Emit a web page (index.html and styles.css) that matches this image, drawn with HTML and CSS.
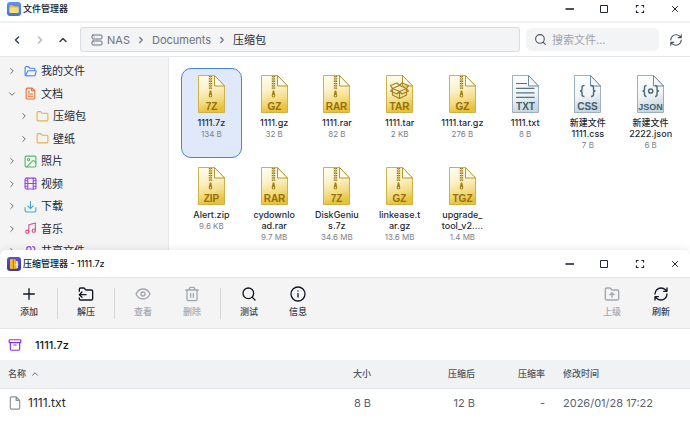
FILE: index.html
```html
<!DOCTYPE html>
<html lang="zh-CN">
<head>
<meta charset="utf-8">
<meta name="viewport" content="width=device-width, initial-scale=1">
<title>文件管理器</title>
<link rel="stylesheet" href="styles.css">
</head>
<body>
<svg class="sprite" aria-hidden="true">
  <defs>
    <linearGradient id="gold" x1="0" y1="0" x2="0.2" y2="1">
      <stop offset="0" stop-color="#fffdf0"/><stop offset="0.4" stop-color="#fbf3cd"/><stop offset="0.75" stop-color="#f3dc82"/><stop offset="1" stop-color="#e8c23c"/>
    </linearGradient>
    <linearGradient id="steel" x1="0" y1="0" x2="0.2" y2="1">
      <stop offset="0" stop-color="#ffffff"/><stop offset="0.6" stop-color="#f0f4f7"/><stop offset="1" stop-color="#c9d5dd"/>
    </linearGradient>
    <linearGradient id="violet" x1="0" y1="0" x2="0" y2="1">
      <stop offset="0" stop-color="#5a52c8"/><stop offset="1" stop-color="#3f37a4"/>
    </linearGradient>
    <linearGradient id="azure" x1="0" y1="0" x2="0" y2="1">
      <stop offset="0" stop-color="#5b93f5"/><stop offset="1" stop-color="#3b74ea"/>
    </linearGradient>
  </defs>
  <symbol id="gold-page" viewBox="0 0 27 38">
    <path d="M.5.5H16.5L26.5 11V37.5H.5Z" fill="url(#gold)" stroke="#cfb04a"/>
    <path d="M16.5.5V11H26.5Z" fill="#fffdf0" stroke="#b8962a"/>
  </symbol>
  <symbol id="steel-page" viewBox="0 0 27 38">
    <path d="M.5.5H16.5L26.5 11V37.5H.5Z" fill="url(#steel)" stroke="#9db0bc"/>
    <path d="M16.5.5V11H26.5Z" fill="#f4f8fa" stroke="#6f8b9c"/>
  </symbol>
  <symbol id="zipper" viewBox="0 0 27 38">
    <path d="M12.5 1V14" stroke="#94700f" stroke-width="3.4" stroke-dasharray="1.3 1"/>
    <path d="M12.5 1V14" stroke="#d3b75c" stroke-width=".8"/>
    <path d="M11.700 15.5h1.600l1 5.200a1.800 1.800 0 1 1-3.600 0z" fill="#a37e14"/>
    <circle cx="12.5" cy="20.8" r=".8" fill="#fff4c0"/>
  </symbol>
  <symbol id="open-box" viewBox="0 0 27 38">
    <g fill="none" stroke="#a5811c" stroke-width="1.2" stroke-linejoin="round">
      <path d="M6.5 13.5V20l7 3.5 7-3.5v-6.5M13.5 16v7.500M6.500 13.500l7-3 7 3-7 3zM6.500 13.500l-2 2.500 6.500 3 2.500-2.500 2.500 2.500 6.500-3-2-2.500M6.500 13.500l-2-3 6.500-2.500 2.500 2.500 2.500-2.500 6.500 2.500-2 3"/>
    </g>
  </symbol>
  <symbol id="minus" viewBox="0 0 12 12"><path d="M1.500 6h8.500" stroke="currentColor" stroke-width="1.600"/></symbol>
  <symbol id="square" viewBox="0 0 12 12"><path d="M1.500 2.500h7v7h-7z" fill="none" stroke="currentColor"/></symbol>
  <symbol id="corners" viewBox="0 0 12 12"><path d="M2.500 4.500v-2h2M7.500 2.500h2v2M9.500 7.500v2h-2M4.500 9.500h-2v-2" fill="none" stroke="currentColor" stroke-width="1.200"/></symbol>
  <symbol id="cross" viewBox="0 0 12 12"><path d="M3.200 3.200l5.600 5.600M8.800 3.200l-5.600 5.600" stroke="currentColor"/></symbol>
  <symbol id="left" viewBox="0 0 24 24"><path d="M15 18l-6-6 6-6"/></symbol>
  <symbol id="right" viewBox="0 0 24 24"><path d="M9 18l6-6-6-6"/></symbol>
  <symbol id="up" viewBox="0 0 24 24"><path d="M18 15l-6-6-6 6"/></symbol>
  <symbol id="down" viewBox="0 0 24 24"><path d="M6 9l6 6 6-6"/></symbol>
  <symbol id="server" viewBox="0 0 24 24"><rect x="2" y="2" width="20" height="8" rx="2"/><rect x="2" y="14" width="20" height="8" rx="2"/><path d="M6 6h.01M6 18h.01"/></symbol>
  <symbol id="search" viewBox="0 0 24 24"><circle cx="11" cy="11" r="8"/><path d="M21 21l-4.300-4.300"/></symbol>
  <symbol id="refresh" viewBox="0 0 24 24"><path d="M3 12a9 9 0 0 1 9-9 9.750 9.750 0 0 1 6.740 2.740L21 8M21 3v5h-5M21 12a9 9 0 0 1-9 9 9.750 9.750 0 0 1-6.740-2.740L3 16M8 16H3v5"/></symbol>
  <symbol id="folder" viewBox="0 0 24 24"><path d="M20 20a2 2 0 0 0 2-2V8a2 2 0 0 0-2-2h-7.900a2 2 0 0 1-1.690-.9L9.600 3.900A2 2 0 0 0 7.930 3H4a2 2 0 0 0-2 2v13a2 2 0 0 0 2 2Z"/></symbol>
  <symbol id="folder-open" viewBox="0 0 24 24"><path d="M4 20a2 2 0 0 1-2-2V5a2 2 0 0 1 2-2h4l3 3h7a2 2 0 0 1 2 2v2M3 19l3.500-7a2 2 0 0 1 2-1.500H21a1.500 1.500 0 0 1 1.400 2l-2 6a2 2 0 0 1-1.900 1.500H4"/></symbol>
  <symbol id="doc" viewBox="0 0 24 24"><path d="M15 2H6a2 2 0 0 0-2 2v16a2 2 0 0 0 2 2h12a2 2 0 0 0 2-2V7ZM14 2v5h6M10 9H8M16 13H8M16 17H8"/></symbol>
  <symbol id="image" viewBox="0 0 24 24"><rect x="2" y="2" width="20" height="20" rx="2"/><circle cx="8.500" cy="8.500" r="2"/><path d="M5 22l11-11a2 2 0 0 1 2.800 0L22 14"/></symbol>
  <symbol id="film" viewBox="0 0 24 24"><rect x="2" y="2" width="20" height="20" rx="2"/><path d="M7 2v20M17 2v20M7 12h10M2 7h5M2 12h5M2 17h5M17 17h5M17 12h5M17 7h5"/></symbol>
  <symbol id="download" viewBox="0 0 24 24"><path d="M2 14v5a3 3 0 0 0 3 3h14a3 3 0 0 0 3-3v-5M7 11l5 5 5-5M12 3v13"/></symbol>
  <symbol id="music" viewBox="0 0 24 24"><path d="M9 18V5l12-3v14"/><circle cx="6" cy="18" r="3"/><circle cx="18" cy="16" r="3"/></symbol>
  <symbol id="users" viewBox="0 0 24 24"><circle cx="9" cy="7" r="4"/><path d="M2 21v-2a4 4 0 0 1 4-4h6a4 4 0 0 1 4 4v2M16 3a4 4 0 0 1 0 8M22 21v-2a4 4 0 0 0-3-3.900"/></symbol>
  <symbol id="plus" viewBox="0 0 24 24"><path d="M4 12h16M12 4v16"/></symbol>
  <symbol id="extract" viewBox="0 0 24 24"><path d="M2 8V5a2 2 0 0 1 2-2h5l3 3h8a2 2 0 0 1 2 2v11a2 2 0 0 1-2 2H4a2 2 0 0 1-2-2v-1M2 13h10M6 9l-4 4 4 4"/></symbol>
  <symbol id="eye" viewBox="0 0 24 24"><path d="M1.500 12S5 4.500 12 4.500 22.500 12 22.500 12 19 19.500 12 19.500 1.500 12 1.500 12Z"/><circle cx="12" cy="12" r="3"/></symbol>
  <symbol id="trash" viewBox="0 0 24 24"><path d="M2.500 6h19M19.500 6v14a2 2 0 0 1-2 2h-11a2 2 0 0 1-2-2V6M8 6V3.500A2 2 0 0 1 10 2h4a2 2 0 0 1 2 1.500V6M10 11v6M14 11v6"/></symbol>
  <symbol id="info" viewBox="0 0 24 24"><circle cx="12" cy="12" r="10.500"/><path d="M12 16.500V11.500M12 7.500h.01"/></symbol>
  <symbol id="folder-up" viewBox="0 0 24 24"><path d="M20 21a2 2 0 0 0 2-2V8a2 2 0 0 0-2-2h-8L9 3H4a2 2 0 0 0-2 2v14a2 2 0 0 0 2 2ZM12 10v7M9 13l3-3 3 3"/></symbol>
  <symbol id="archive" viewBox="0 0 24 24"><rect x="2" y="3" width="20" height="5" rx="1"/><path d="M4 8v11a2 2 0 0 0 2 2h12a2 2 0 0 0 2-2V8M10 12h4"/></symbol>
  <symbol id="file" viewBox="0 0 24 24"><path d="M14 1.500H6a2 2 0 0 0-2 2v17a2 2 0 0 0 2 2h12a2 2 0 0 0 2-2V7.500ZM14 1.500v6h6"/></symbol>
</svg>

<section class="window files" aria-label="文件管理器">
  <header class="titlebar">
    <svg class="logo" viewBox="0 0 14 14"><rect width="14" height="14" rx="3" fill="url(#azure)"/><path d="M2.500 4a.8.8 0 0 1 .8-.8h2.500l1 1h4a.8.8 0 0 1 .8.8v5a.8.8 0 0 1-.8.8H3.300a.8.8 0 0 1-.8-.8z" fill="#eeb93c"/><path d="M2.500 5.600h9.100v4.600a.8.8 0 0 1-.8.8H3.300a.8.8 0 0 1-.8-.8z" fill="#fbdc76"/></svg>
    <h1>文件管理器</h1>
    <div class="controls">
      <button aria-label="最小化"><svg><use href="#minus"/></svg></button>
      <button aria-label="最大化"><svg><use href="#square"/></svg></button>
      <button aria-label="全屏"><svg><use href="#corners"/></svg></button>
      <button aria-label="关闭"><svg><use href="#cross"/></svg></button>
    </div>
  </header>
  <div class="navbar">
    <div class="history">
      <button aria-label="后退"><svg class="icon"><use href="#left"/></svg></button>
      <button aria-label="前进" disabled><svg class="icon"><use href="#right"/></svg></button>
      <button aria-label="上级"><svg class="icon"><use href="#up"/></svg></button>
    </div>
    <nav class="crumbs" aria-label="路径">
      <a href="#"><svg class="icon"><use href="#server"/></svg>NAS</a>
      <svg class="icon arrow"><use href="#right"/></svg>
      <a href="#">Documents</a>
      <svg class="icon arrow"><use href="#right"/></svg>
      <a href="#" class="current">压缩包</a>
    </nav>
    <label class="search"><svg class="icon"><use href="#search"/></svg><input type="search" placeholder="搜索文件..." aria-label="搜索文件"></label>
    <button class="reload" aria-label="刷新"><svg class="icon"><use href="#refresh"/></svg></button>
  </div>
  <div class="body">
    <nav class="sidebar" aria-label="文件夹">
      <ul>
        <li><a href="#"><svg class="icon arrow"><use href="#right"/></svg><svg class="icon blue"><use href="#folder-open"/></svg>我的文件</a></li>
        <li><a href="#"><svg class="icon arrow"><use href="#down"/></svg><svg class="icon orange"><use href="#doc"/></svg>文档</a></li>
        <li class="child"><a href="#"><svg class="icon arrow"><use href="#right"/></svg><svg class="icon amber"><use href="#folder"/></svg>压缩包</a></li>
        <li class="child"><a href="#"><svg class="icon arrow"><use href="#right"/></svg><svg class="icon amber"><use href="#folder"/></svg>壁纸</a></li>
        <li><a href="#"><svg class="icon arrow"><use href="#right"/></svg><svg class="icon green"><use href="#image"/></svg>照片</a></li>
        <li><a href="#"><svg class="icon arrow"><use href="#right"/></svg><svg class="icon purple"><use href="#film"/></svg>视频</a></li>
        <li><a href="#"><svg class="icon arrow"><use href="#right"/></svg><svg class="icon sky"><use href="#download"/></svg>下载</a></li>
        <li><a href="#"><svg class="icon arrow"><use href="#right"/></svg><svg class="icon pink"><use href="#music"/></svg>音乐</a></li>
        <li><a href="#"><svg class="icon arrow"><use href="#right"/></svg><svg class="icon purple"><use href="#users"/></svg>共享文件</a></li>
      </ul>
    </nav>
    <main class="grid">
      <button class="item selected"><svg class="type" viewBox="0 0 27 38"><use href="#gold-page"/><use href="#zipper"/><text x="13.500" y="35">7Z</text></svg><span class="name">1111.7z</span><span class="size">134 B</span></button>
      <button class="item"><svg class="type" viewBox="0 0 27 38"><use href="#gold-page"/><use href="#zipper"/><text x="13.500" y="35">GZ</text></svg><span class="name">1111.gz</span><span class="size">32 B</span></button>
      <button class="item"><svg class="type" viewBox="0 0 27 38"><use href="#gold-page"/><use href="#zipper"/><text x="13.500" y="35">RAR</text></svg><span class="name">1111.rar</span><span class="size">82 B</span></button>
      <button class="item"><svg class="type" viewBox="0 0 27 38"><use href="#gold-page"/><use href="#open-box"/><text x="13.500" y="35">TAR</text></svg><span class="name">1111.tar</span><span class="size">2 KB</span></button>
      <button class="item"><svg class="type" viewBox="0 0 27 38"><use href="#gold-page"/><use href="#zipper"/><text x="13.500" y="35">GZ</text></svg><span class="name">1111.tar.gz</span><span class="size">276 B</span></button>
      <button class="item"><svg class="type steel" viewBox="0 0 27 38"><use href="#steel-page"/><path d="M4 8.500h11M4 13.300h18.500M4 17.800h18.500M4 22.300h18.500" stroke="#557587" stroke-width="1.200"/><text x="13.500" y="35">TXT</text></svg><span class="name">1111.txt</span><span class="size">8 B</span></button>
      <button class="item"><svg class="type steel" viewBox="0 0 27 38"><use href="#steel-page"/><path d="M10.500 10.500q-2.500 0-2.500 2v2q0 1.500-2 1.500 2 0 2 1.500v2q0 2 2.500 2M17 10.500q2.500 0 2.500 2v2q0 1.500 2 1.500-2 0-2 1.500v2q0 2-2.500 2" fill="none" stroke="#4b6b7d" stroke-width="1.400"/><text x="13.500" y="35">CSS</text></svg><span class="name">新建文件<br>1111.css</span><span class="size">7 B</span></button>
      <button class="item"><svg class="type steel json" viewBox="0 0 27 38"><use href="#steel-page"/><path d="M9.500 10.500q-2 0-2 2v2q0 1.500-2 1.500 2 0 2 1.500v2q0 2 2 2M18 10.500q2 0 2 2v2q0 1.500 2 1.500-2 0-2 1.500v2q0 2-2 2" fill="none" stroke="#4b6b7d" stroke-width="1.400"/><circle cx="13.700" cy="16" r="2.100" fill="none" stroke="#4b6b7d" stroke-width="1.500"/><text x="13.500" y="35">JSON</text></svg><span class="name">新建文件<br>2222.json</span><span class="size">6 B</span></button>
      <button class="item"><svg class="type" viewBox="0 0 27 38"><use href="#gold-page"/><use href="#zipper"/><text x="13.500" y="35">ZIP</text></svg><span class="name">Alert.zip</span><span class="size">9.6 KB</span></button>
      <button class="item"><svg class="type" viewBox="0 0 27 38"><use href="#gold-page"/><use href="#zipper"/><text x="13.500" y="35">RAR</text></svg><span class="name">cydownlo<br>ad.rar</span><span class="size">9.7 MB</span></button>
      <button class="item"><svg class="type" viewBox="0 0 27 38"><use href="#gold-page"/><use href="#zipper"/><text x="13.500" y="35">7Z</text></svg><span class="name">DiskGeniu<br>s.7z</span><span class="size">34.6 MB</span></button>
      <button class="item"><svg class="type" viewBox="0 0 27 38"><use href="#gold-page"/><use href="#zipper"/><text x="13.500" y="35">GZ</text></svg><span class="name">linkease.t<br>ar.gz</span><span class="size">13.6 MB</span></button>
      <button class="item"><svg class="type" viewBox="0 0 27 38"><use href="#gold-page"/><use href="#zipper"/><text x="13.500" y="35">TGZ</text></svg><span class="name">upgrade_<br>tool_v2....</span><span class="size">1.4 MB</span></button>
    </main>
  </div>
</section>

<section class="window archive" aria-label="压缩管理器">
  <header class="titlebar">
    <svg class="logo" viewBox="0 0 14 14"><rect width="14" height="14" rx="3" fill="url(#violet)"/><rect x="3" y="2" width="5.500" height="10" rx="1" fill="#f3b928"/><rect x="5.800" y="2" width="1" height="10" fill="#a9780c"/><path d="M8.500 3.500l2.500 1v6.500l-2.500 1z" fill="#ffd766"/><path d="M8.500 7.500h2.700" stroke="#fff" stroke-width="1.400"/></svg>
    <h1>压缩管理器 - 1111.7z</h1>
    <div class="controls">
      <button aria-label="最小化"><svg><use href="#minus"/></svg></button>
      <button aria-label="最大化"><svg><use href="#square"/></svg></button>
      <button aria-label="全屏"><svg><use href="#corners"/></svg></button>
      <button aria-label="关闭"><svg><use href="#cross"/></svg></button>
    </div>
  </header>
  <div class="toolbar">
    <button><svg class="icon"><use href="#plus"/></svg>添加</button>
    <i class="rule"></i>
    <button><svg class="icon"><use href="#extract"/></svg>解压</button>
    <i class="rule"></i>
    <button disabled><svg class="icon"><use href="#eye"/></svg>查看</button>
    <button disabled><svg class="icon"><use href="#trash"/></svg>删除</button>
    <i class="rule"></i>
    <button><svg class="icon"><use href="#search"/></svg>测试</button>
    <button><svg class="icon"><use href="#info"/></svg>信息</button>
    <span class="spacer"></span>
    <button disabled><svg class="icon"><use href="#folder-up"/></svg>上级</button>
    <button><svg class="icon"><use href="#refresh"/></svg>刷新</button>
  </div>
  <div class="path"><svg class="icon"><use href="#archive"/></svg>1111.7z</div>
  <table>
    <colgroup><col><col class="wide"><col class="wide"><col class="ratio"><col class="date"></colgroup>
    <thead>
      <tr><th><span class="cell">名称<svg class="icon"><use href="#up"/></svg></span></th><th class="num">大小</th><th class="num">压缩后</th><th class="num">压缩率</th><th>修改时间</th></tr>
    </thead>
    <tbody>
      <tr><td><span class="cell entry"><svg class="icon"><use href="#file"/></svg>1111.txt</span></td><td class="num">8 B</td><td class="num">12 B</td><td class="num">-</td><td>2026/01/28 17:22</td></tr>
    </tbody>
  </table>
</section>
</body>
</html>
```
FILE: styles.css
```css
* { box-sizing: border-box; }

body {
  margin: 0;
  min-height: 100vh;
  display: flex;
  flex-direction: column;
  background: #f4f4f4;
  color: #1f2937;
  font: 11px/16px Inter, "Noto Sans CJK SC", sans-serif;
}

button {
  margin: 0;
  padding: 0;
  border: 0;
  background: none;
  color: inherit;
  font: inherit;
}

a { color: inherit; text-decoration: none; }
svg { display: block; flex: none; }
.sprite { position: absolute; width: 0; height: 0; }

.icon {
  width: 12px;
  height: 12px;
  fill: none;
  stroke: currentColor;
  stroke-width: 2;
  stroke-linecap: round;
  stroke-linejoin: round;
}

/* Window frame */
.window { background: #fff; }

.titlebar {
  display: flex;
  align-items: center;
  gap: 2px;
  padding: 0 9px 0 7px;
}

.titlebar h1 {
  flex: 1;
  margin: 0;
  font-size: 9px;
  font-weight: 500;
  color: #111827;
}

.logo { width: 14px; height: 14px; }
.controls { display: flex; gap: 23px; }
.controls svg { width: 12px; height: 12px; }

/* File manager */
.files { height: 256px; overflow: hidden; }

.files .titlebar {
  height: 23px;
  padding-bottom: 4px;
  border-bottom: 2px solid #f1f1f2;
}

.navbar {
  display: flex;
  align-items: center;
  gap: 6px;
  height: 34px;
  padding: 0 3px 0 6px;
  border-bottom: 1px solid #e5e7eb;
}

.history { display: flex; gap: 1px; }

.history button,
.reload {
  display: grid;
  place-items: center;
  width: 22px;
  height: 22px;
  color: #374151;
}

.history .icon { stroke-width: 3; }
.history button:disabled { color: #b4b8c0; }
.reload .icon { width: 14px; height: 14px; color: #4b5563; }

.crumbs {
  flex: 1;
  display: flex;
  align-items: center;
  gap: 6px;
  height: 25px;
  padding: 0 10px;
  border: 1px solid #d9dce1;
  border-radius: 3px;
  background: #f3f4f5;
  color: #6b7280;
}

.crumbs a { display: flex; align-items: center; gap: 4px; }
.crumbs .arrow { width: 10px; height: 10px; stroke-width: 3; }
.crumbs .current { color: #1f2937; }

.search {
  display: flex;
  align-items: center;
  gap: 5px;
  width: 133px;
  height: 23px;
  padding: 0 8px;
  border-radius: 6px;
  background: #f3f4f6;
  color: #4b5563;
}

.search .icon { width: 13px; height: 13px; }

.search input {
  flex: 1;
  min-width: 0;
  padding: 0;
  border: 0;
  outline: 0;
  background: none;
  color: #1f2937;
  font: inherit;
}

.search input::placeholder { color: #9ca3af; opacity: 1; }

.body { display: flex; }

.sidebar {
  width: 169px;
  flex: none;
  border-right: 1px solid #e5e7eb;
  background: #f4f4f4;
}

.sidebar ul {
  display: flex;
  flex-direction: column;
  justify-content: space-between;
  height: 204px;
  margin: 0;
  padding: 4px 0 0 7px;
  list-style: none;
}

.sidebar a {
  display: flex;
  align-items: center;
  gap: 4px;
  height: 20px;
}

.sidebar .child { padding-left: 12px; }
.sidebar .icon { width: 13px; height: 13px; }
.sidebar .arrow { width: 10px; height: 10px; margin-right: 3px; color: #4b5563; }
.blue { color: #4a84ee; }
.orange { color: #ea6c2c; }
.amber { color: #eab03a; }
.green { color: #4fb862; }
.purple { color: #9347e6; }
.sky { color: #3fa5d8; }
.pink { color: #e04890; }

.grid {
  flex: 1;
  display: grid;
  grid-template-columns: repeat(8, minmax(0, 1fr));
  grid-auto-rows: 90px;
  align-content: start;
  gap: 2px;
  padding: 11px 9px 0 12px;
}

.item {
  display: flex;
  flex-direction: column;
  align-items: center;
  padding-top: 6px;
  border: 1px solid transparent;
  border-radius: 10px;
}

.item.selected { border-color: #4285dc; background: #dfe9fa; }
.type { width: 27px; height: 38px; }

.type text {
  fill: #94700f;
  font: bold 10px "Liberation Sans", sans-serif;
  text-anchor: middle;
}

.steel text { fill: #3f6173; }
.json text { font-size: 9px; }

.name {
  margin-top: 4px;
  font-size: 9px;
  font-weight: 500;
  line-height: 11px;
}

.size { color: #7b818c; font-size: 8px; line-height: 12px; }

/* Archive manager */
.archive {
  position: relative;
  flex: 1;
  margin-top: -6px;
  border-radius: 6px 6px 0 0;
  box-shadow: 0 0 10px rgba(0, 0, 0, 0.1);
}

.archive .titlebar { height: 28px; border-bottom: 1px solid #e4e5e7; }

.toolbar {
  display: flex;
  align-items: center;
  gap: 1px;
  height: 51px;
  padding: 0 5px;
  border-bottom: 1px solid #e4e5e7;
  background: #f4f4f4;
}

.toolbar button {
  display: flex;
  flex-direction: column;
  align-items: center;
  gap: 2px;
  width: 48px;
  color: #374151;
  font-size: 9px;
  font-weight: 500;
}

.toolbar .icon { width: 16px; height: 16px; color: #111827; }
.toolbar button:disabled,
.toolbar button:disabled .icon { color: #a3a7af; }
.rule { width: 1px; height: 31px; margin: 0 3px; background: #d4d6da; }
.spacer { flex: 1; }

.path {
  display: flex;
  align-items: center;
  gap: 13px;
  height: 31px;
  padding: 0 8px;
  color: #111827;
  font-weight: 500;
}

.path .icon { width: 14px; height: 14px; color: #8b2fe0; }

table {
  width: 100%;
  border-collapse: collapse;
  table-layout: fixed;
}

.wide { width: 104px; }
.ratio { width: 70px; }
.date { width: 136px; }

th, td { padding: 0 9px; text-align: left; white-space: nowrap; }
th:first-child, td:first-child { padding-left: 8px; }
th.num, td.num { text-align: right; }

th {
  height: 28px;
  border-bottom: 1px solid #e5e7eb;
  background: #f1f2f4;
  color: #4b5563;
  font-size: 9px;
  font-weight: 500;
}

th .icon { width: 10px; height: 10px; }
td { height: 30px; color: #5b6270; }
.cell { display: flex; align-items: center; gap: 4px; }
.entry { gap: 6px; color: #1f2937; font-size: 12px; }
.entry .icon { width: 14px; height: 14px; color: #8b909a; }
```
